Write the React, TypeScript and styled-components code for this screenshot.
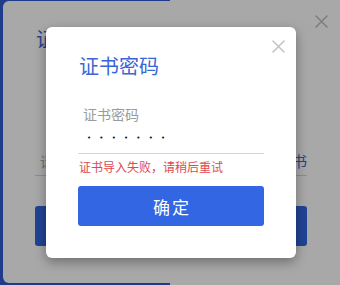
import React from "react";
import styled, { createGlobalStyle } from "styled-components";

const GlobalStyle = createGlobalStyle`
  html, body {
    margin: 0;
    padding: 0;
    width: 340px;
    height: 285px;
    overflow: hidden;
    font-family: "Noto Sans CJK SC", "Noto Sans", sans-serif;
  }
`;

const Page = styled.div`
  display: flex;
  width: 340px;
  height: 285px;
`;

const BluePane = styled.div`
  width: 170px;
  background: #2e5bd2;
`;

const WhitePane = styled.div`
  flex: 1;
  background: #ffffff;
`;

const Overlay = styled.div`
  position: fixed;
  inset: 0;
  background: rgba(0, 0, 0, 0.34);
  z-index: 2;
`;

const Dialog = styled.div<{ $left: number; $top: number; $w: number; $h: number; $z: number; $shadow?: boolean }>`
  position: fixed;
  left: ${(p) => p.$left}px;
  top: ${(p) => p.$top}px;
  width: ${(p) => p.$w}px;
  height: ${(p) => p.$h}px;
  z-index: ${(p) => p.$z};
  box-sizing: border-box;
  background: #ffffff;
  border-radius: 6px;
  display: flex;
  flex-direction: column;
  box-shadow: ${(p) => (p.$shadow ? "0 4px 12px rgba(0, 0, 0, 0.35)" : "none")};
`;

const BackBody = styled.div`
  display: flex;
  flex-direction: column;
  padding: 24px 30px 0 32px;
`;

const FrontBody = styled.div`
  display: flex;
  flex-direction: column;
  padding: 25px 32px 0 32px;
`;

const Close = styled.button<{ $top: number; $right: number; $color: string }>`
  position: absolute;
  top: ${(p) => p.$top}px;
  right: ${(p) => p.$right}px;
  width: 13px;
  height: 13px;
  padding: 0;
  border: none;
  background: none;
  color: ${(p) => p.$color};
  display: flex;
`;

const Title = styled.div`
  font-size: 20px;
  line-height: 28px;
  color: #3a66d4;
  padding-left: 1px;
`;

const Field = styled.div<{ $mt: number }>`
  display: flex;
  flex-direction: column;
  margin-top: ${(p) => p.$mt}px;
  padding: 0 0 4px 0;
  border-bottom: 1px solid #d6d6d6;
`;

const Label = styled.div`
  font-size: 14px;
  line-height: 20px;
  color: #9b9b9b;
  padding-left: 5px;
`;

const Dots = styled.div`
  margin-top: 4px;
  padding-left: 9px;
  font-family: "DejaVu Sans", sans-serif;
  font-size: 7px;
  line-height: 21px;
  letter-spacing: 8.2px;
  color: #111;
`;

const BackRow = styled.div`
  display: flex;
  justify-content: space-between;
  align-items: center;
  font-size: 15px;
  line-height: 20px;
  padding-left: 5px;
`;

const Placeholder = styled.span`
  color: #aaa;
  font-size: 14px;
`;

const Link = styled.span`
  color: #3a66d4;
`;

const ErrorText = styled.div`
  margin-top: 5px;
  font-size: 12px;
  line-height: 16px;
  color: #e0484e;
  padding-left: 1px;
`;

const PrimaryButton = styled.button<{ $mt: number }>`
  margin-top: ${(p) => p.$mt}px;
  height: 40px;
  border: none;
  border-radius: 3px;
  background: #3266e3;
  color: #ffffff;
  font-family: "Noto Sans CJK SC", "Noto Sans", sans-serif;
  font-size: 17px;
  letter-spacing: 2px;
  padding: 0 0 0 2px;
`;

const XIcon = () => (
  <svg width="13" height="13" viewBox="0 0 13 13">
    <path d="M1 1 L12 12 M12 1 L1 12" stroke="currentColor" strokeWidth="1.6" strokeLinecap="round" />
  </svg>
);

export default function App() {
  return (
    <>
      <GlobalStyle />
      <Page>
        <BluePane />
        <WhitePane />
      </Page>

      <Dialog $left={3} $top={1} $w={334} $h={282} $z={1}>
        <Close $top={14} $right={9} $color="#c0c0c0">
          <XIcon />
        </Close>
        <BackBody>
          <Title>证书导入</Title>
          <Field $mt={98}>
            <BackRow>
              <Placeholder>请选择证书文件</Placeholder>
              <Link>选择证书</Link>
            </BackRow>
          </Field>
          <PrimaryButton $mt={30}>导入</PrimaryButton>
        </BackBody>
      </Dialog>

      <Overlay />

      <Dialog $left={46} $top={27} $w={250} $h={231} $z={3} $shadow>
        <Close $top={13} $right={11} $color="#c4c4c4">
          <XIcon />
        </Close>
        <FrontBody>
          <Title>证书密码</Title>
          <Field $mt={24}>
            <Label>证书密码</Label>
            <Dots>•••••••</Dots>
          </Field>
          <ErrorText>证书导入失败，请稍后重试</ErrorText>
          <PrimaryButton $mt={11}>确定</PrimaryButton>
        </FrontBody>
      </Dialog>
    </>
  );
}
